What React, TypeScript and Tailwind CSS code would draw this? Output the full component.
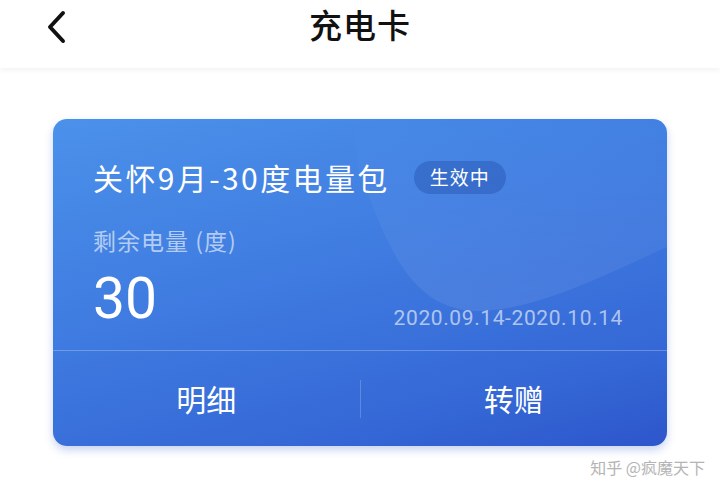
import React from "react";

const font = '"Noto Sans CJK SC", "Noto Sans", sans-serif';

function BackIcon() {
  return (
    <svg width="24" height="34" viewBox="0 0 24 34" fill="none">
      <path d="M19 3 L6 17 L19 31" stroke="#111" strokeWidth="4" strokeLinecap="round" strokeLinejoin="round" />
    </svg>
  );
}

export default function App() {
  return (
    <div className="w-[720px] h-[497px] bg-white relative overflow-hidden" style={{ fontFamily: font }}>
      {/* top bar */}
      <div className="relative h-[68px] flex items-center justify-center bg-white shadow-[0_2px_6px_rgba(0,0,0,0.06)]">
        <div className="absolute left-[44px] top-[10px]">
          <BackIcon />
        </div>
        <div className="text-[33px] font-medium text-[#111] tracking-[1px] mt-[-18px]">充电卡</div>
      </div>

      {/* card */}
      <div className="mx-[53px] mt-[51px] h-[327px] rounded-[14px] relative overflow-hidden bg-[linear-gradient(165deg,#4b91ea_0%,#3f7be0_45%,#3568d6_80%,#2d56cb_100%)] shadow-[0_4px_8px_rgba(40,80,200,0.25)]">
        <svg className="absolute inset-0" width="614" height="327" viewBox="0 0 614 327">
          <defs>
            <linearGradient id="swoosh" x1="0" y1="1" x2="0" y2="0">
              <stop offset="0" stopColor="#ffffff" stopOpacity="0.08" />
              <stop offset="1" stopColor="#ffffff" stopOpacity="0" />
            </linearGradient>
          </defs>
          <path d="M305 50 C 330 110, 350 188, 420 192 C 480 194, 560 152, 614 128 L 614 0 L 300 0 Z" fill="url(#swoosh)" />
        </svg>
        <div className="relative flex flex-col h-full">
          <div className="px-[40px] pt-[38px]">
            <div className="flex items-center">
              <span className="text-[30px] text-white leading-[40px] tracking-[2.4px]">关怀9月-30度电量包</span>
              <span className="ml-[24px] h-[33px] px-[16px] rounded-full bg-[rgba(30,70,160,0.35)] text-white text-[19px] tracking-[1px] flex items-center">生效中</span>
            </div>
            <div className="mt-[28px] text-[23px] text-[rgba(255,255,255,0.6)] leading-[30px] tracking-[1px]">剩余电量 (度)</div>
            <div className="flex items-end justify-between mt-[15px]">
              <span className="text-[57px] text-white leading-[58px]" style={{ fontFamily: '"Roboto", sans-serif' }}>30</span>
              <span className="text-[21px] text-[rgba(255,255,255,0.6)] leading-[28px] tracking-[0.6px] mb-[-4px] mr-[4px]" style={{ fontFamily: '"Roboto", sans-serif' }}>2020.09.14-2020.10.14</span>
            </div>
          </div>
          <div className="mt-[22px] h-px bg-[rgba(255,255,255,0.25)]" />
          <div className="flex-1 flex items-center">
            <div className="flex-1 text-center text-[30px] text-white">明细</div>
            <div className="w-px h-[38px] bg-[rgba(255,255,255,0.2)]" />
            <div className="flex-1 text-center text-[30px] text-white">转赠</div>
          </div>
        </div>
      </div>

      <div className="absolute right-[15px] top-[455px] text-[16px] text-[#b4b4b4]">知乎 @疯魔天下</div>
    </div>
  );
}
